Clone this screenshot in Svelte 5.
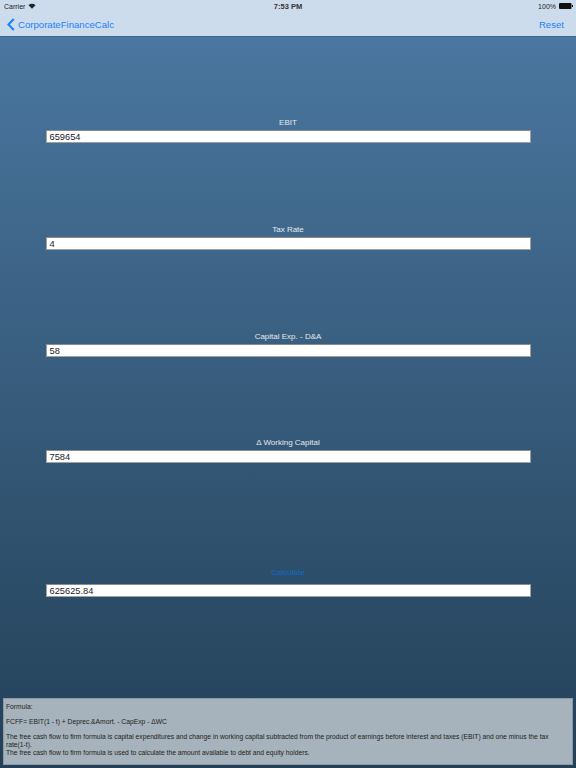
<script>
	const fields = [
		{ label: "EBIT", value: "659654" },
		{ label: "Tax Rate", value: "4" },
		{ label: "Capital Exp. - D&A", value: "58" },
		{ label: "Δ Working Capital", value: "7584" },
	];
</script>

<div class="page">
	<header>
		<div class="status">
			<div class="carrier">
				<span>Carrier</span>
				<svg width="8" height="6" viewBox="0 0 18 14">
					<path d="M9 13.5 L0.8 5 A12 12 0 0 1 17.2 5 Z" fill="#222" />
				</svg>
			</div>
			<span class="time">7:53 PM</span>
			<div class="battery">
				<span>100%</span>
				<svg width="14" height="6" viewBox="0 0 14 6">
					<rect x="0" y="0" width="12.5" height="6" rx="1" fill="#111" />
					<rect x="13" y="2" width="1" height="2" fill="#111" />
				</svg>
			</div>
		</div>
		<nav>
			<div class="back">
				<svg width="8" height="13" viewBox="0 0 8 13">
					<path d="M6.8 1 L1.4 6.5 L6.8 12" fill="none" stroke="#1a82f7" stroke-width="2.1" />
				</svg>
				<span>CorporateFinanceCalc</span>
			</div>
			<span class="reset">Reset</span>
		</nav>
	</header>

	<main>
		{#each fields as field}
			<div class="field">
				<div class="label">{field.label}</div>
				<div class="input">{field.value}</div>
			</div>
		{/each}

		<div class="result">
			<div class="calculate">Calculate</div>
			<div class="input">625625.84</div>
		</div>

		<div class="formula">
			<p>Formula:</p>
			<p>FCFF= EBIT(1 - t) + Deprec.&amp;Amort. - CapExp - ΔWC</p>
			<p>
				The free cash flow to firm formula is capital expenditures and change in working capital subtracted from the product of earnings before interest and taxes (EBIT) and one minus the tax <span class="nowrap">rate(1-t).</span><br />
				The free cash flow to firm formula is used to calculate the amount available to debt and equity holders.
			</p>
		</div>
	</main>
</div>

<style>
	:global(body) {
		margin: 0;
		font-family: "Liberation Sans", Arial, sans-serif;
	}

	.page {
		width: 576px;
		height: 768px;
		display: flex;
		flex-direction: column;
		overflow: hidden;
	}

	header {
		height: 37px;
		flex: none;
		background: #cddcec;
		border-bottom: 1px solid #3f6a8f;
		box-sizing: border-box;
	}

	.status {
		height: 12px;
		padding: 0 3px 0 4px;
		display: flex;
		align-items: center;
		justify-content: space-between;
		position: relative;
		font-size: 7px;
		color: #222;
	}

	.carrier, .battery {
		display: flex;
		align-items: center;
		gap: 3px;
	}

	.time {
		position: absolute;
		left: 0;
		right: 0;
		text-align: center;
		font-size: 7.5px;
		font-weight: bold;
		color: #333;
	}

	nav {
		height: 24px;
		padding: 0 12px 0 7px;
		display: flex;
		align-items: center;
		justify-content: space-between;
		font-size: 9.6px;
		color: #1a82f7;
	}

	.back {
		display: flex;
		align-items: center;
		gap: 3px;
	}

	main {
		flex: 1;
		background: linear-gradient(#4a769f, #234057);
		padding-top: 80px;
		display: flex;
		flex-direction: column;
		min-height: 0;
	}

	.field {
		height: 106.8px;
		flex: none;
	}

	.label, .calculate {
		height: 12px;
		line-height: 12px;
		font-size: 8px;
		text-align: center;
		color: #e4e9ee;
		margin-bottom: 1px;
	}

	.input {
		margin: 0 45px 0 45.5px;
		height: 13px;
		box-sizing: border-box;
		background: #fff;
		border: 1px solid #a0a0a0;
		border-top-color: #8b8b8b;
		padding-left: 3px;
		font-size: 9.3px;
		line-height: 12px;
		color: #222;
	}

	.result {
		margin-top: 23px;
		flex: none;
	}

	.calculate {
		color: #0a6cd0;
		margin-bottom: 5px;
	}

	.formula {
		margin: auto 3px 3px;
		height: 67px;
		box-sizing: border-box;
		background: #a6b3bc;
		border: 1px solid #8b9aa6;
		padding: 4px 2px 0;
		font-size: 6.72px;
		line-height: 7.7px;
		color: #222;
	}

	.formula p {
		margin: 0 0 7.4px;
	}

	.nowrap {
		white-space: nowrap;
	}
</style>
